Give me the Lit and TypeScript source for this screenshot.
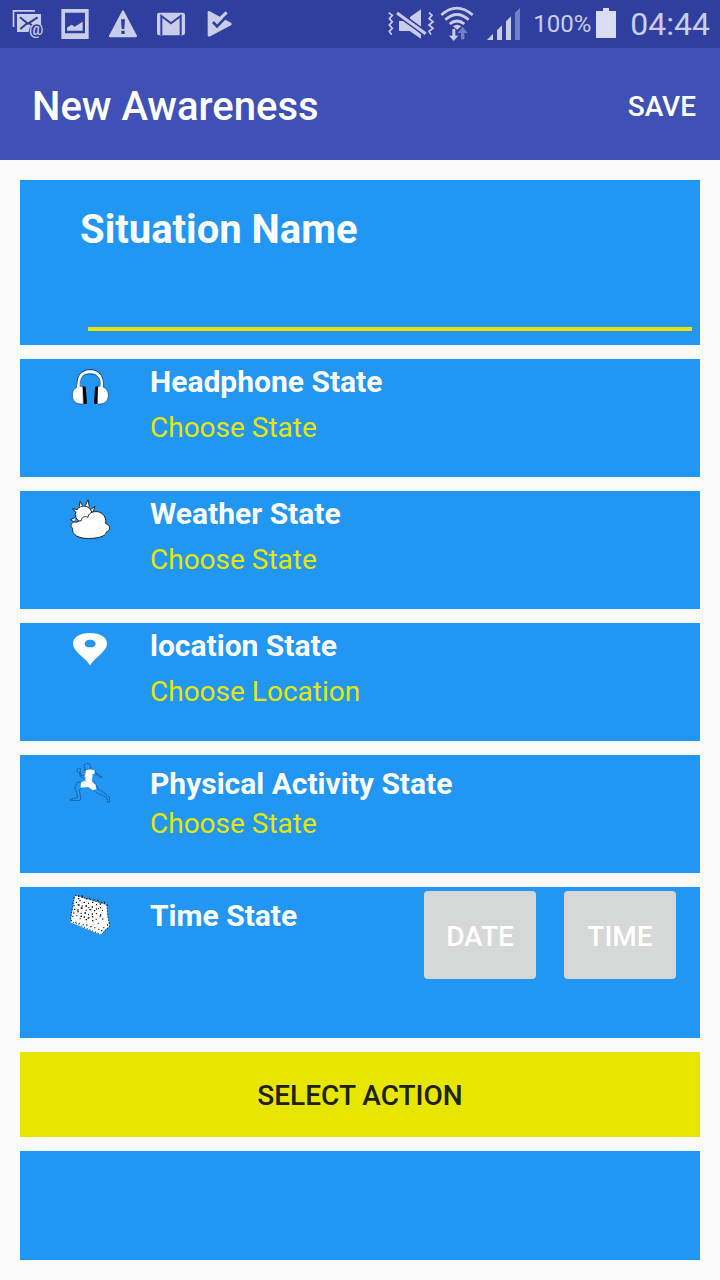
import { LitElement, html, css, svg, nothing } from "lit";
import { customElement, property, state } from "lit/decorators.js";

const headphones = html`<svg class="icon" viewBox="30 21 120 120" aria-hidden="true">
  <path d="M52 86C48 48 62 29 90 29s44 19 38 57" fill="none" stroke="#1d3c5c" stroke-width="3"/>
  <path d="M57 84C54 50 66 35 90 35s38 15 34 49" fill="none" stroke="#fff" stroke-width="9"/>
  <path d="M60 78C60 52 70 42 90 42s32 10 31 36" fill="none" stroke="#1d3c5c" stroke-width="2"/>
  <path d="M69 79C48 77 37 88 37 106s12 28 33 26zM112 79c21-2 33 9 33 27s-12 28-33 26z" fill="#fff" stroke="#1d3c5c" stroke-width="2"/>
  <path d="M55 74v10M125 74v10" stroke="#fff" stroke-width="7"/>
  <path d="M68 79l9 1 4 51-9 1zM105 80l9-1-3 53-9-1z" fill="#000"/>
</svg>`;

const weather = html`<svg class="icon" viewBox="30 27 120 120" aria-hidden="true">
  <g fill="#fff" stroke="#222" stroke-width="3" stroke-linejoin="round">
    <circle cx="71" cy="73" r="25"/>
    <path d="M58 50l2-16 8 13M76 47l8-18 4 21M91 59l14-10-5 15M48 67l-11-11 16 3M46 82l-14 7 10 7"/>
    <path d="M50 97C34 92 28 109 38 115C36 127 43 137 60 142C77 148 114 146 128 138C138 135 138 128 139 126C152 123 153 104 137 101C142 77 119 56 93 68C86 73 84 77 84 82C73 76 64 83 64 92C59 92 53 94 50 97z"/>
  </g>
</svg>`;

const pin = html`<svg class="icon" viewBox="30 27 120 120" aria-hidden="true">
  <path fill="#fff" fill-rule="evenodd" d="M90 33C58 33 39 46 39 65c0 18 22 33 35 46q9 9 16 19q7-10 16-19c13-13 35-28 35-46C141 46 122 33 90 33zM90 53c10 0 17 5 17 12s-7 11-17 11-16-4-16-11 6-12 16-12z"/>
</svg>`;

const runner = html`<svg class="icon" viewBox="30 24 120 120" aria-hidden="true">
  <path d="M81 43q8-3 12 1l12 2-2 10-5 1-2 22 11 10 2 14-10 3-15-10-22 2 1-18 14-2-4-14 2-14z" fill="#fff"/>
  <g fill="none" stroke="#16375a" stroke-width="2" stroke-dasharray="5 2">
    <path d="M73 40v-10l7-5 10 2 2 10-5 7-11-1zM73 43l4 8-3 12-11-2-3-9 3-8-5-5-6 3-1 7 7 4 3 12 12 5 7-2"/>
    <path d="M104 45l5 11 8 3 8 8-3 2-9-8-8-4M122 62l3 6"/>
    <path d="M67 80l-16 2-6 15 8 28-8 5-14 3v3l28 1 4-5-5-27 9-7"/>
    <path d="M99 79l10 12 4 11 16 9 16 13 4 2-1 15-4 2-3-14-19-11-12-4-11-11"/>
  </g>
</svg>`;

const specks = svg`<path stroke="#111" stroke-width="4" fill="none" d="M46 31h3m5 2h4m7 0h3m-14 8h4m8-5h3m8 5h4m7-1h3m10 4h3m7 2h5m8 6h3m5 0h3m5 8h3M48 52h3m7-5h4m9 5h4m9 3h3m9-3h4m8 7h3m8-2h4M41 62h3m9-2h6m6 3h3m8 0h5m4 5h3m7-2h4m9 6h3m9-4h3M42 73h4m6 2h4m6-6h6m9 7h3m8-2h6m8 3h4m8-6h3m9 5h3M40 84h3m9-4h4m6 5h3m8-1h5m6 5h3m8-2h4m9-1h3m9 4h4M37 94h3m9-2h3m9 2h5m5 2h4m8 3h5m8-4h4m7 8h3m9-9h3M33 106h3m10 6h3m7 3h3m9 4h3m8 1h3m9 5h4m8 3h3m9 5h3m5 4h4m3-9h3m8-8h3m4-6h3m4-10h3M59 101h3m15 3h4m15 3h4m13 8h3m11-13h3"/>`;

const calendar = html`<svg class="icon" viewBox="30 30 120 120" aria-hidden="true">
  <path d="M46 31l52 16 42 12 3 36 6 27-14 12-12 16-92-38z" fill="#fff"/>
  ${specks}
  <path stroke="#111" stroke-width="3" fill="none" stroke-dasharray="3 6" d="M46 31l94 27 4 38 5 28M31 108l92 41 26-25M42 36l-11 70"/>
</svg>`;

@customElement("status-bar")
export class StatusBar extends LitElement {
  static styles = css`
    :host { display: flex; align-items: center; height: 48px; padding: 0 10px 0 3px; background: #303f9f; color: #c9cde9; font-family: Roboto, sans-serif; }
    svg { display: block; height: 48px; fill: #c9cde9; flex: none; }
    .notice { width: 48px; }
    .system { display: flex; align-items: center; margin-left: auto; }
    .mute { width: 48px; margin-right: 5px; }
    .wifi { width: 34px; margin-right: 12px; }
    .signal { width: 36px; margin-right: 11px; }
    .battery { width: 22px; margin: 0 13px 0 4px; }
    .percent { font-size: 24px; line-height: 48px; }
    .clock { font-size: 32px; line-height: 48px; }
  `;

  render() {
    return html`
      <svg class="notice" viewBox="9 0 144 144">
        <path d="M38 30h67v5H43v46h-5z"/>
        <path d="M51 42h72v54H51z"/>
        <g fill="none" stroke="#303f9f" stroke-width="6"><path d="M60 52l24 19 29-19M61 87l22-19M86 68l12 10"/></g>
        <circle cx="109" cy="94" r="23" fill="#303f9f"/>
        <text x="87" y="106" font-size="48" font-weight="500">@</text>
      </svg>
      <svg class="notice" viewBox="153 0 144 144">
        <path fill-rule="evenodd" d="M184 27h82v90h-82zM195 38v62h60V38z"/>
        <path d="M201 92V83l14-9 9 6 24-15v27z"/>
      </svg>
      <svg class="notice" viewBox="297 0 144 144">
        <path fill-rule="evenodd" d="M369 31q2 0 4 4l38 72q1 5-4 5h-76q-5 0-4-5l38-72q2-4 4-4zM363 58l2 29h8l2-29zM364 92v10h10V92z"/>
      </svg>
      <svg class="notice" viewBox="441 0 144 144">
        <rect x="471" y="38" width="84" height="68" rx="7"/>
        <path d="M484 105V48l29 22 29-22v57" fill="none" stroke="#303f9f" stroke-width="6"/>
      </svg>
      <svg class="notice" viewBox="585 0 144 144">
        <path d="M623 37q0-6 6-3l64 34q5 4 0 8l-62 33q-8 4-8-4z"/>
        <path d="M639 66l12 13 38-39" fill="none" stroke="#303f9f" stroke-width="8"/>
        <path d="M651 65l29-28" fill="none" stroke="#c9cde9" stroke-width="9"/>
      </svg>
      <div class="system">
        <svg class="mute" viewBox="21 0 144 144">
          <path d="M123 28v57L90 58V51zM57 63l20 0 46 40v13L89 93H57z"/>
          <path d="M51 39l86 62" stroke="#303f9f" stroke-width="18"/>
          <path d="M51 39l86 62" stroke="#c9cde9" stroke-width="9"/>
          <path d="M26 38l11 8-9 10 9 9-9 10 9 10-9 9 7 10M147 38l9 8-9 10 12 9-12 10 12 10-12 9 6 10" fill="none" stroke="#c9cde9" stroke-width="5"/>
        </svg>
        <svg class="wifi" viewBox="180 0 102 144">
          <g fill="none" stroke="#c9cde9" stroke-width="8"><path d="M184 45q46-41 94 0M196 59q35-31 70 0M209 72q22-18 44 0"/></g>
          <path d="M219 79q12-9 25 0l-13 10z"/>
          <path d="M216 86h11v20h10l-16 18-16-18h11z" stroke="#303f9f" stroke-width="2"/>
          <path d="M243 118V99h-10l15-19 15 19h-10v19z" fill="#7580c3"/>
        </svg>
        <svg class="signal" viewBox="318 0 108 144">
          <path d="M321 120l18-19v19zM351 120V91l15-15v44zM378 120V64l15-15v71z"/>
          <path d="M405 120V38l15-14v96z" fill="#7580c3"/>
        </svg>
        <span class="percent">100%</span>
        <svg class="battery" viewBox="645 0 66 144"><path fill="#dadcf0" d="M669 24h18v9h21v81h-60V33h21z"/></svg>
        <span class="clock">04:44</span>
      </div>
    `;
  }
}

@customElement("state-card")
export class StateCard extends LitElement {
  @property() heading = "";
  @property() choice = "";
  @property({ type: Boolean, reflect: true }) compact = false;
  @property({ attribute: false }) icon: unknown = nothing;

  static styles = css`
    :host { display: flex; align-items: flex-start; box-sizing: border-box; min-height: 118px; padding: 0 24px 0 50px; background: #2196f3; color: #fff; font-family: Roboto, sans-serif; }
    .icon { display: block; flex: none; width: 40px; height: 40px; margin: 8px 40px 0 0; }
    .text { display: flex; flex: 1; flex-direction: column; align-items: flex-start; gap: 6px; padding-top: 3px; }
    :host([compact]) .text { gap: 0; padding-top: 9px; }
    h2 { margin: 0; font-size: 30px; font-weight: 700; line-height: 40px; }
    button { padding: 0; border: 0; background: none; color: #e6e600; font: 400 28px/40px Roboto, sans-serif; cursor: pointer; }
  `;

  render() {
    return html`
      ${this.icon}
      <div class="text">
        <h2>${this.heading}</h2>
        ${this.choice ? html`<button type="button">${this.choice}</button>` : nothing}
      </div>
      <slot></slot>
    `;
  }
}

@customElement("app-root")
export class AppRoot extends LitElement {
  @state() private situation = "";

  static styles = css`
    :host { display: block; min-height: 100vh; background: #fafafa; font-family: Roboto, sans-serif; color: #fff; }
    button { border: 0; font: 500 28px/40px Roboto, sans-serif; cursor: pointer; }
    .bar { display: flex; align-items: center; justify-content: space-between; box-sizing: border-box; height: 112px; padding: 5px 24px 0 32px; background: #3f51b5; }
    h1 { margin: 0; font-size: 40px; font-weight: 500; line-height: 48px; }
    .save { padding: 0; background: none; color: #fff; }
    main { display: flex; flex-direction: column; gap: 14px; padding: 20px; }
    .name { display: flex; flex-direction: column; box-sizing: border-box; height: 165px; padding: 26px 8px 14px 60px; background: #2196f3; }
    label { font-size: 40px; font-weight: 700; line-height: 48px; }
    input { flex: 1; min-width: 0; margin-left: 8px; padding: 0; border: 0; border-bottom: 4px solid #e6e600; border-radius: 0; outline: 0; background: none; color: #fff; font: 400 36px/48px Roboto, sans-serif; }
    .time { min-height: 151px; }
    .pickers { display: flex; gap: 28px; padding-top: 4px; }
    .pick { width: 112px; height: 88px; padding: 4px 0 0; border-radius: 4px; background: #d6d7d7; color: #fff; }
    .action { height: 85px; padding: 2px 0 0; background: #e6e600; color: #212100; }
    .result { height: 109px; background: #2196f3; }
  `;

  render() {
    return html`
      <status-bar></status-bar>
      <header class="bar">
        <h1>New Awareness</h1>
        <button class="save" type="button">SAVE</button>
      </header>
      <main>
        <section class="name">
          <label for="situation">Situation Name</label>
          <input id="situation" type="text" .value=${this.situation}
            @input=${(e: Event) => { this.situation = (e.target as HTMLInputElement).value; }}>
        </section>
        <state-card heading="Headphone State" choice="Choose State" .icon=${headphones}></state-card>
        <state-card heading="Weather State" choice="Choose State" .icon=${weather}></state-card>
        <state-card heading="location State" choice="Choose Location" .icon=${pin}></state-card>
        <state-card compact heading="Physical Activity State" choice="Choose State" .icon=${runner}></state-card>
        <state-card compact class="time" heading="Time State" .icon=${calendar}>
          <div class="pickers">
            <button class="pick" type="button">DATE</button>
            <button class="pick" type="button">TIME</button>
          </div>
        </state-card>
        <button class="action" type="button">SELECT ACTION</button>
        <section class="result"></section>
      </main>
    `;
  }
}
